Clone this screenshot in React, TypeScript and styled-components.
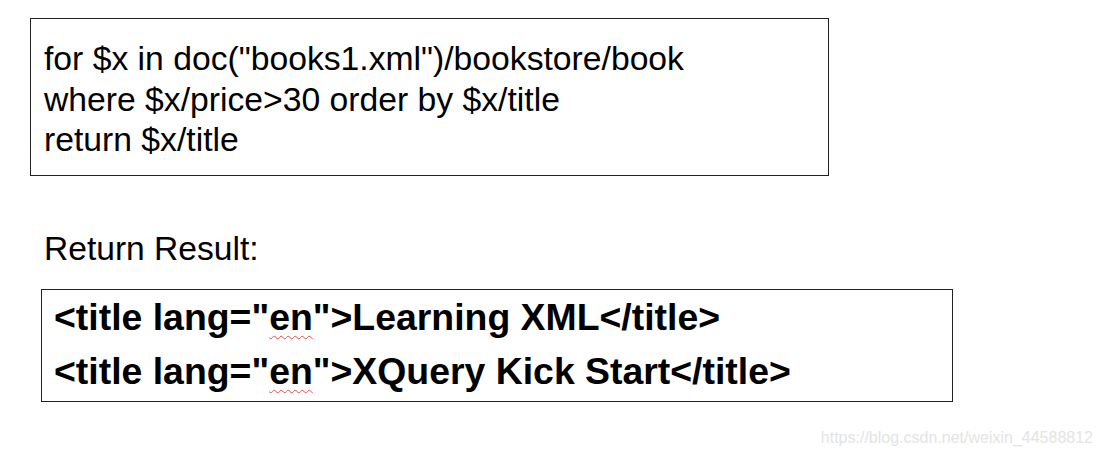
import React from "react";
import styled, { createGlobalStyle } from "styled-components";

const Global = createGlobalStyle`
  html, body { margin: 0; padding: 0; background: #fff; }
  body { font-family: "Liberation Sans", Arial, sans-serif; color: #000; }
`;

const Page = styled.div`
  position: relative;
  width: 1103px;
  height: 459px;
  overflow: hidden;
  padding: 18px 0 0 30px;
  box-sizing: border-box;
  display: flex;
  flex-direction: column;
  align-items: flex-start;
`;

const QueryBox = styled.div`
  width: 799px;
  height: 158px;
  box-sizing: border-box;
  border: 1px solid #222;
  padding: 19px 0 0 13px;
  font-size: 33.7px;
  line-height: 40.5px;
`;

const Line = styled.div`
  white-space: pre;
`;

const Label = styled.div`
  margin: 53px 0 0 14px;
  font-size: 33.6px;
  line-height: 40px;
`;

const ResultBox = styled.div`
  margin: 20px 0 0 11px;
  width: 912px;
  height: 113px;
  box-sizing: border-box;
  border: 1px solid #222;
  padding: 0 0 0 12px;
  font-size: 37.4px;
  font-weight: 700;
  line-height: 54px;
`;

const Squiggle = styled.span`
  text-decoration: underline wavy #ef4a4a;
  text-decoration-thickness: 1px;
  text-underline-offset: 5px;
`;

const Watermark = styled.div`
  position: absolute;
  right: 10px;
  bottom: 12px;
  font-size: 16px;
  color: #e4e4e4;
`;

const ResultLine = ({ text }: { text: string }) => (
  <Line>
    {'<title lang="'}
    <Squiggle>en</Squiggle>
    {'">' + text + "</title>"}
  </Line>
);

export default function App() {
  return (
    <>
      <Global />
      <Page>
        <QueryBox>
          <Line>for $x in doc("books1.xml")/bookstore/book</Line>
          <Line>where $x/price&gt;30 order by $x/title</Line>
          <Line>return $x/title</Line>
        </QueryBox>
        <Label>Return Result:</Label>
        <ResultBox>
          <ResultLine text="Learning XML" />
          <ResultLine text="XQuery Kick Start" />
        </ResultBox>
        <Watermark>https://blog.csdn.net/weixin_44588812</Watermark>
      </Page>
    </>
  );
}
